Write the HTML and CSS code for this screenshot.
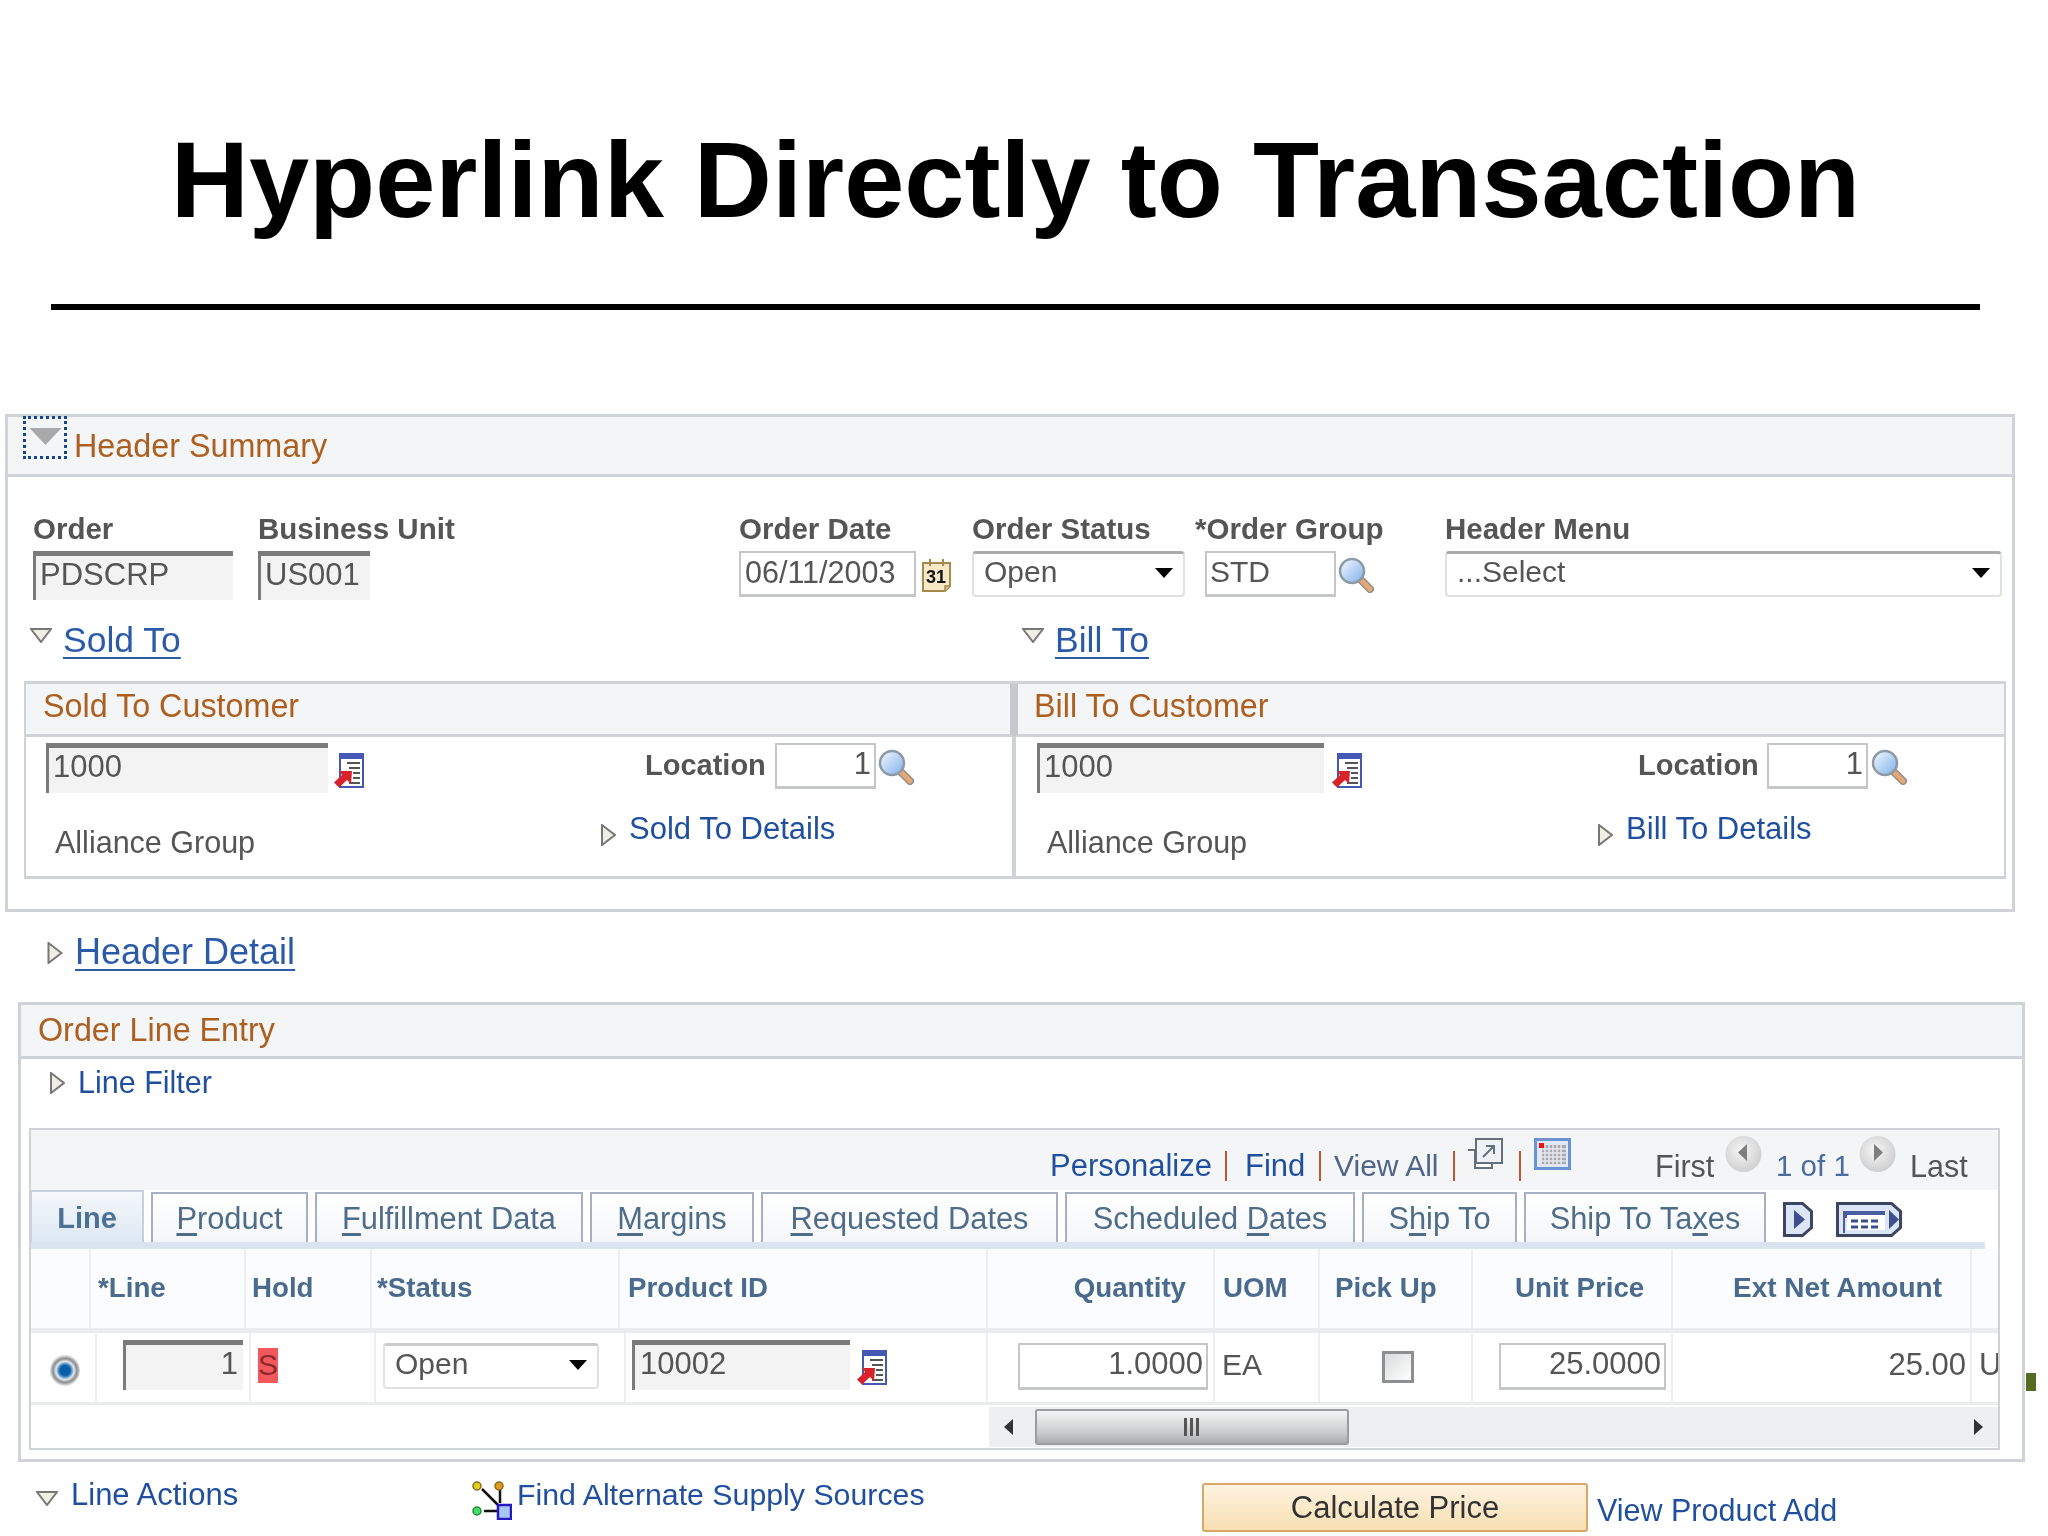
FILE: index.html
```html
<!DOCTYPE html>
<html lang="en">
<head>
<meta charset="utf-8">
<title>Hyperlink Directly to Transaction</title>
<link rel="stylesheet" href="styles.css">
</head>
<body>
<svg class="defs" width="0" height="0" aria-hidden="true">
  <defs>
    <linearGradient id="lens" x1="0" y1="0" x2="1" y2="1"><stop offset="0" stop-color="#f4f9ff"/><stop offset="1" stop-color="#7fb0ea"/></linearGradient>
    <symbol id="mag" viewBox="0 0 36 36">
      <line x1="23" y1="23" x2="32" y2="32" stroke="#8f8f8f" stroke-width="8" stroke-linecap="round"/>
      <line x1="23" y1="23" x2="32" y2="32" stroke="#e6a873" stroke-width="5" stroke-linecap="round"/>
      <circle cx="14" cy="14" r="12" fill="url(#lens)" stroke="#8d9aa6" stroke-width="2.5"/>
    </symbol>
    <symbol id="prompt" viewBox="0 0 30 35">
      <rect x="6" y="1" width="23" height="33" fill="#fff" stroke="#4458b4" stroke-width="2"/>
      <rect x="6" y="1" width="23" height="5" fill="#4458b4"/>
      <path d="M13 10h13M15 15h11M19 20h7M19 25h7M15 30h11" stroke="#555" stroke-width="2"/>
      <path d="M18 18l-1 13-4-4-8 7.500-5-5 8-7.500-3-4z" fill="#d8232a"/>
    </symbol>
    <symbol id="cal" viewBox="0 0 30 34">
      <path d="M1 5h27v23l-5 5H1z" fill="#f7e8c6" stroke="#a58a4e" stroke-width="2"/>
      <path d="M23 33v-5h5" fill="#d8c08a" stroke="#a58a4e" stroke-width="1.5"/>
      <path d="M8 1v7M21 1v7" stroke="#a58a4e" stroke-width="2"/>
      <text x="14" y="25" font-family="Liberation Sans" font-size="18" font-weight="700" text-anchor="middle" fill="#111">31</text>
    </symbol>
    <symbol id="tri-down" viewBox="0 0 22 15">
      <path d="M1 1h20L11 14z" fill="#eeeee4" stroke="#777" stroke-width="2"/>
    </symbol>
    <symbol id="tri-right" viewBox="0 0 15 22">
      <path d="M1 1l13 10L1 21z" fill="#eeeee4" stroke="#777" stroke-width="2"/>
    </symbol>
    <symbol id="popout" viewBox="0 0 36 32">
      <path d="M1 12h7v18h17v-5" fill="#fff" stroke="#66707c" stroke-width="2"/>
      <rect x="9" y="1" width="26" height="24" fill="#eef2f6" stroke="#66707c" stroke-width="2"/>
      <path d="M16 19l11-11M19 8h8v8" fill="none" stroke="#66707c" stroke-width="2"/>
    </symbol>
    <symbol id="grid" viewBox="0 0 37 32">
      <rect x="1.5" y="1.5" width="34" height="29" fill="#dfe8f4" stroke="#6d94d2" stroke-width="3"/>
      <path d="M8 7h24v19H8z" fill="#a8a8b0"/>
      <path d="M11 6v21M15 6v21M19 6v21M23 6v21M27 6v21M7 11h25M7 15h25M7 19h25M7 23h25" stroke="#e6e8ec" stroke-width="1.5"/>
      <rect x="5" y="5" width="5" height="5" fill="#ee1111"/>
    </symbol>
    <radialGradient id="orb" cx=".45" cy=".4" r=".6"><stop offset="0" stop-color="#f6f6f6"/><stop offset="1" stop-color="#cfcfcf"/></radialGradient>
    <symbol id="orb-left" viewBox="0 0 37 38">
      <circle cx="18.5" cy="19" r="18" fill="url(#orb)"/>
      <path d="M22 9v17l-9-8.500z" fill="#7f7f7f"/>
    </symbol>
    <symbol id="orb-right" viewBox="0 0 37 38">
      <circle cx="18.500" cy="19" r="18" fill="url(#orb)"/>
      <path d="M15 9v17l9-8.500z" fill="#7f7f7f"/>
    </symbol>
    <symbol id="tab-next" viewBox="0 0 30 35">
      <path d="M1.500 1.500h18l9 8v16l-9 8h-18z" fill="#dbe5f6" stroke="#3d4660" stroke-width="3"/>
      <path d="M11 8l11 9.500-11 9.500z" fill="#3f4f8c"/>
    </symbol>
    <symbol id="tab-all" viewBox="0 0 66 35">
      <path d="M1.500 1.500h54l9 8v16l-9 8h-54z" fill="#dbe5f6" stroke="#3d4660" stroke-width="3"/>
      <path d="M8 14v17M8 10h40v5H8z" fill="#4a5c9e" stroke="#4a5c9e" stroke-width="2"/>
      <rect x="11" y="13" width="38" height="15" fill="#fff"/>
      <path d="M15 19h30M15 25h30" stroke="#3f4f8c" stroke-width="3" stroke-dasharray="7 3"/>
      <path d="M53 8l10 9.500-10 9.500z" fill="#3f4f8c"/>
    </symbol>
    <symbol id="nodes" viewBox="0 0 40 39">
      <path d="M10 8l17 17M28 6v16M12 30h14" stroke="#111" stroke-width="2.500"/>
      <circle cx="5" cy="5" r="4" fill="#e0d020" stroke="#8a6a20" stroke-width="1.500"/>
      <circle cx="27" cy="5" r="4" fill="#e09a20" stroke="#8a6a20" stroke-width="1.500"/>
      <circle cx="5" cy="30" r="4" fill="#44dd66" stroke="#2a8a3a" stroke-width="1.500"/>
      <rect x="26" y="24" width="13" height="14" fill="#a8c8f4" stroke="#2a18c0" stroke-width="2.500"/>
    </symbol>
  </defs>
</svg>

<div class="slide">
  <header class="slide-head">
    <h1 class="slide-title">Hyperlink Directly to Transaction</h1>
    <div class="slide-rule"></div>
  </header>

  <section class="panel panel--summary">
    <div class="bar bar--summary">
      <span class="focus-box"><svg class="ic-focus" viewBox="0 0 34 18"><path d="M0 0h34L17 18z" fill="#a9a9a9"/></svg></span>
      <span class="bar-title">Header Summary</span>
    </div>
    <div class="fields">
      <div class="field">
        <span class="label">Order</span>
        <span class="input ro ro--order">PDSCRP</span>
      </div>
      <div class="field">
        <span class="label">Business Unit</span>
        <span class="input ro ro--unit">US001</span>
      </div>
      <div class="field">
        <span class="label">Order Date</span>
        <div class="ctl"><span class="input edit edit--date">06/11/2003</span><svg class="ic-cal"><use href="#cal"/></svg></div>
      </div>
      <div class="field">
        <span class="label">Order Status</span>
        <span class="select select--status">Open<i class="caret"></i></span>
      </div>
      <div class="field">
        <span class="label">*Order Group</span>
        <div class="ctl ctl--group"><span class="input edit edit--group">STD</span><svg class="ic-mag"><use href="#mag"/></svg></div>
      </div>
      <div class="field">
        <span class="label">Header Menu</span>
        <span class="select select--menu">...Select<i class="caret"></i></span>
      </div>
    </div>

    <div class="disclosures">
      <div class="disc"><svg class="ic-down"><use href="#tri-down"/></svg><a class="big-link">Sold To</a></div>
      <div class="disc"><svg class="ic-down"><use href="#tri-down"/></svg><a class="big-link">Bill To</a></div>
    </div>

    <div class="customers">
      <div class="cust cust--sold">
        <div class="bar bar--cust"><span class="bar-title">Sold To Customer</span></div>
        <div class="cust-top">
          <span class="input ro ro--cust">1000</span>
          <svg class="ic-prompt"><use href="#prompt"/></svg>
          <span class="label label--loc">Location</span>
          <span class="input edit edit--loc">1</span>
          <svg class="ic-mag ic-mag--loc"><use href="#mag"/></svg>
        </div>
        <div class="cust-bottom">
          <span class="plain">Alliance Group</span>
          <div class="details"><svg class="ic-right"><use href="#tri-right"/></svg><a class="link">Sold To Details</a></div>
        </div>
      </div>
      <div class="cust cust--bill">
        <div class="bar bar--cust"><span class="bar-title">Bill To Customer</span></div>
        <div class="cust-top">
          <span class="input ro ro--cust">1000</span>
          <svg class="ic-prompt"><use href="#prompt"/></svg>
          <span class="label label--loc">Location</span>
          <span class="input edit edit--loc">1</span>
          <svg class="ic-mag ic-mag--loc"><use href="#mag"/></svg>
        </div>
        <div class="cust-bottom">
          <span class="plain">Alliance Group</span>
          <div class="details"><svg class="ic-right"><use href="#tri-right"/></svg><a class="link">Bill To Details</a></div>
        </div>
      </div>
    </div>
  </section>

  <div class="header-detail"><svg class="ic-right ic-right--hd"><use href="#tri-right"/></svg><a class="big-link big-link--hd">Header Detail</a></div>

  <section class="panel panel--lines">
    <div class="bar bar--lines"><span class="bar-title">Order Line Entry</span></div>
    <div class="line-filter"><svg class="ic-right"><use href="#tri-right"/></svg><a class="link">Line Filter</a></div>

    <div class="gridbox">
      <nav class="gridnav">
        <a class="link">Personalize</a><i class="sep"></i>
        <a class="link">Find</a><i class="sep"></i>
        <span class="muted">View All</span><i class="sep"></i>
        <svg class="ic-popout"><use href="#popout"/></svg><i class="sep"></i>
        <svg class="ic-grid"><use href="#grid"/></svg>
        <span class="plain">First</span>
        <svg class="ic-orb"><use href="#orb-left"/></svg>
        <span class="count">1 of 1</span>
        <svg class="ic-orb"><use href="#orb-right"/></svg>
        <span class="plain">Last</span>
      </nav>

      <div class="tabs">
        <span class="tab tab--active"><span>Line</span></span>
        <span class="tab"><span><u>P</u>roduct</span></span>
        <span class="tab"><span><u>F</u>ulfillment Data</span></span>
        <span class="tab"><span><u>M</u>argins</span></span>
        <span class="tab"><span><u>R</u>equested Dates</span></span>
        <span class="tab"><span>Scheduled <u>D</u>ates</span></span>
        <span class="tab"><span>S<u>h</u>ip To</span></span>
        <span class="tab"><span>Ship To Ta<u>x</u>es</span></span>
        <svg class="ic-tabnext"><use href="#tab-next"/></svg>
        <svg class="ic-taball"><use href="#tab-all"/></svg>
      </div>
      <div class="tab-stripe"></div>

      <div class="thead">
        <div class="th"></div>
        <div class="th th--line">*Line</div>
        <div class="th th--hold">Hold</div>
        <div class="th th--status">*Status</div>
        <div class="th th--product">Product ID</div>
        <div class="th th--qty">Quantity</div>
        <div class="th th--uom">UOM</div>
        <div class="th th--pick">Pick Up</div>
        <div class="th th--price">Unit Price</div>
        <div class="th th--ext">Ext Net Amount</div>
        <div class="th th--end"></div>
      </div>

      <div class="trow">
        <div class="td td--radio"><span class="radio"></span></div>
        <div class="td td--line"><span class="input ro ro--line">1</span></div>
        <div class="td td--hold"><span class="hold-flag">S</span></div>
        <div class="td td--status"><span class="select select--rowstatus">Open<i class="caret"></i></span></div>
        <div class="td td--product"><span class="input ro ro--product">10002</span><svg class="ic-prompt ic-prompt--row"><use href="#prompt"/></svg></div>
        <div class="td td--qty"><span class="input edit edit--qty">1.0000</span></div>
        <div class="td td--uom"><span class="cell-text">EA</span></div>
        <div class="td td--pick"><span class="check"></span></div>
        <div class="td td--price"><span class="input edit edit--price">25.0000</span></div>
        <div class="td td--ext"><span class="cell-text">25.00</span></div>
        <div class="td td--end"><span class="cell-text">U</span></div>
      </div>

      <div class="hscroll">
        <div class="track">
          <i class="arrow arrow--left"></i>
          <div class="thumb"><i class="grip"></i></div>
          <i class="arrow arrow--right"></i>
        </div>
      </div>
    </div>
  </section>

  <footer class="actions">
    <div class="act act--line"><svg class="ic-down ic-down--act"><use href="#tri-down"/></svg><a class="link">Line Actions</a></div>
    <div class="act act--find"><svg class="ic-nodes"><use href="#nodes"/></svg><a class="link link--find">Find Alternate Supply Sources</a></div>
    <button class="calc" type="button">Calculate Price</button>
    <a class="link link--view">View Product Add</a>
  </footer>

  <i class="edge-mark"></i>
</div>
</body>
</html>
```

FILE: styles.css
```css
* { box-sizing: border-box; }
html, body { margin: 0; padding: 0; background: #fff; }
body { font-family: "Liberation Sans", Arial, sans-serif; color: #555; }
.defs { position: absolute; }
svg { display: block; flex: none; }
a { cursor: pointer; }

.slide { position: relative; width: 2048px; height: 1536px; overflow: hidden; }

/* Slide heading */
.slide-head { height: 310px; padding-top: 120px; }
.slide-title { margin: 0; font-size: 108.200px; line-height: 120px; font-weight: 700; color: #000; text-align: center; width: 2031px; }
.slide-rule { width: 1929px; height: 6px; margin: 64px 0 0 51px; background: #000; }

/* Panels */
.panel { border: 3px solid #cfd2d6; background: #fff; filter: blur(.45px); }
.panel--summary { width: 2010px; height: 498px; margin: 104px 0 0 5px; }
.panel--lines { width: 2007px; height: 460px; margin: 28px 0 0 18px; }

.bar { display: flex; align-items: center; background: #f3f5f7; border-bottom: 3px solid #cfd2d6; }
.bar-title { font-size: 32.300px; color: #ad5f1f; line-height: 40px; }
.bar--summary { height: 60px; }
.bar--summary .bar-title { margin: 0 0 0 7px; }
.bar--cust { height: 53px; padding: 0 0 7px 17px; }
.cust--sold .bar--cust { border-right: 4px solid #c5c9ce; margin-right: -2px; }
.cust--bill .bar--cust { border-left: 4px solid #c5c9ce; margin-left: -2px; padding-left: 16px; }
.bar--lines { height: 54px; padding: 0 0 2px 17px; }

.focus-box { display: flex; justify-content: center; align-self: flex-start; width: 44px; height: 43px; margin: -1px 0 0 15px; padding-top: 9px; border: 3px dotted #17468c; }
.ic-focus { width: 33px; height: 17px; }

/* Header fields */
.fields { display: grid; grid-template-columns: 225px 481px 233px 223px 250px 557px; padding: 35px 0 0 25px; height: 123px; }
.field { display: flex; flex-direction: column; }
.label { font-size: 29.500px; font-weight: 700; line-height: 34px; color: #555; white-space: nowrap; }
.field .label { margin-bottom: 5px; }
.ctl { display: flex; align-items: flex-start; }
.ctl--group { margin-left: 10px; }

.input { display: block; font-size: 31px; color: #555; white-space: nowrap; flex: none; }
.ro { height: 49px; background: #f3f3f4; border-top: 5px solid #7b7b7b; border-left: 3px solid #7b7b7b; padding: 0 0 0 4px; line-height: 37px; }
.ro--order { width: 200px; }
.ro--unit { width: 112px; }
.ro--cust { width: 282px; padding-left: 4px; line-height: 37px; height: 50px; }
.ro--line { width: 120px; height: 50px; text-align: right; padding: 0 5px 0 0; }
.ro--product { width: 218px; height: 50px; padding-left: 5px; }

.edit { height: 46px; background: #fff; border: 2px solid #c4c6c8; border-bottom-width: 3px; padding: 0 6px; line-height: 38px; }
.edit--date { width: 177px; font-size: 30.500px; padding-left: 4px; }
.edit--group { width: 131px; padding-left: 3px; font-size: 30px; }
.edit--loc { width: 101px; text-align: right; padding-right: 3px; }
.edit--qty { width: 190px; text-align: right; padding-right: 3px; }
.edit--price { width: 167px; text-align: right; padding-right: 3px; }

.ic-cal { width: 30px; height: 34px; margin: 7px 0 0 6px; }
.ic-mag { width: 36px; height: 36px; margin: 6px 0 0 2px; }

.select { display: block; position: relative; height: 46px; font-size: 30px; line-height: 36px; color: #555; background: #fff; border: 2px solid #dfe1e3; border-top: 3px solid #a9abad; border-radius: 4px; padding-left: 10px; }
.select--status { width: 213px; }
.select--menu { width: 557px; padding-left: 10px; }
.select--rowstatus { width: 216px; border-top-color: #c9cbcd; }
.caret { position: absolute; top: 14px; right: 10px; width: 0; height: 0; border-left: 9px solid transparent; border-right: 9px solid transparent; border-top: 10px solid #000; }

/* Disclosures */
.disclosures { display: grid; grid-template-columns: 992px 900px; padding: 17px 0 0 22px; height: 81px; }
.disc { display: flex; align-items: flex-start; }
.ic-down { width: 22px; height: 15px; margin-top: 11px; }
.big-link { font-size: 35.500px; line-height: 46px; color: #2a5aa8; text-decoration: underline; text-decoration-thickness: 2px; text-underline-offset: 5px; margin: 0 0 0 11px; }

/* Customer boxes */
.customers { display: flex; margin-left: 16px; }
.cust { height: 198px; border: 2px solid #cfd2d6; border-top-width: 3px; border-bottom-width: 3px; }
.cust--sold { width: 990px; }
.cust--bill { width: 992px; }
.cust-top { display: grid; align-items: start; padding-top: 6px; height: 61px; }
.cust--sold .cust-top { grid-template-columns: 288px 311px 130px 103px auto; padding-left: 20px; }
.cust--bill .cust-top { grid-template-columns: 295px 306px 129px 104px auto; padding-left: 21px; }
.cust--bill .ro--cust { width: 287px; }
.ic-prompt { width: 30px; height: 35px; margin-top: 10px; }
.label--loc { line-height: 44px; font-size: 29px; }
.ic-mag--loc { margin: 6px 0 0 0; }
.cust-bottom { display: flex; padding-top: 11px; }
.plain { font-size: 30.500px; color: #555; line-height: 40px; white-space: nowrap; }
.cust-bottom .plain { margin-left: 29px; padding-top: 13px; }
.cust--bill .cust-bottom .plain { margin-left: 31px; }
.cust--sold .details { margin-left: 346px; }
.cust--bill .details { margin-left: 351px; }
.details { display: flex; align-items: flex-start; }
.details .ic-right { margin-top: 15px; }
.ic-right { width: 15px; height: 22px; margin-top: 11px; }
.link { font-size: 31px; line-height: 40px; color: #1f4f9e; white-space: nowrap; }
.details .link { margin-left: 13px; }

/* Header Detail */
.header-detail { display: flex; align-items: flex-start; height: 44px; margin: 18px 0 0 47px; filter: blur(.45px); }
.ic-right--hd { width: 16px; height: 22px; margin-top: 12px; }
.big-link--hd { font-size: 36px; margin: -1px 0 0 12px; }

/* Order line entry */
.line-filter { display: flex; align-items: flex-start; height: 69px; padding: 0 0 0 29px; }
.line-filter .ic-right { margin-top: 13px; }
.line-filter .link { margin: 3px 0 0 13px; font-size: 30.500px; }

.gridbox { width: 1971px; height: 322px; margin-left: 8px; border: 2px solid #cfd2d6; overflow: hidden; }
.gridnav { display: grid; grid-template-columns: 175px 20px 74px 15px 119px 14px 52px 15px 121px 70px 51px 83px 51px auto; align-items: center; height: 60px; padding: 8px 0 0 1019px; background: #f3f5f7; }
.gridnav > svg { align-self: start; }
.gridnav > a, .gridnav > span, .gridnav > i { margin-top: 4px; }
.muted { font-size: 30px; color: #4f6488; white-space: nowrap; }
.count { font-size: 29.500px; color: #4a6c9e; white-space: nowrap; }
.sep { display: block; width: 2px; height: 30px; background: #c2572f; }
.ic-popout { width: 36px; height: 32px; }
.ic-grid { width: 37px; height: 32px; }
.ic-orb { width: 37px; height: 38px; margin-top: -3px; }

.tabs { display: grid; grid-template-columns: 114px 157px 268px 164px 297px 290px 155px 242px 40px 82px; column-gap: 7px; justify-content: start; align-items: end; height: 52px; margin-left: -1px; }
.tab { display: flex; justify-content: center; align-items: center; height: 50px; font-size: 30.800px; color: #4f6c88; white-space: nowrap; background: linear-gradient(#fff, #f4f6f9); border: 2px solid #a8aec4; border-bottom: 0; padding-top: 2px; }
.tab u { text-underline-offset: 4px; }
.tab--active { height: 52px; font-weight: 700; font-size: 29px; color: #4d7096; background: linear-gradient(#f4f8fb, #dde8f3); border-color: #c6cfdb; }
.ic-tabnext { width: 30px; height: 35px; align-self: center; margin: 7px 0 0 10px; }
.ic-taball { width: 66px; height: 35px; align-self: center; margin: 7px 0 0 16px; }
.tab-stripe { width: 1954px; height: 7px; background: #d9e4f0; }

.thead, .trow { display: grid; }
.thead { grid-template-columns: 60px 155px 126px 248px 368px 227px 105px 153px 200px 299px 26px; height: 84px; border-bottom: 5px solid #e9ebed; }
.th { display: flex; align-items: center; font-size: 27.700px; font-weight: 700; color: #4a6a8e; white-space: nowrap; background: #fbfcfd; border-right: 2px solid #eceef0; padding-bottom: 2px; }
.th--line { padding-left: 7px; }
.th--hold { padding-left: 6px; }
.th--status { padding-left: 5px; }
.th--product { padding-left: 8px; }
.th--qty { justify-content: flex-end; padding-right: 27px; }
.th--uom { padding-left: 8px; }
.th--pick { padding-left: 15px; }
.th--price { padding-left: 42px; }
.th--ext { padding-left: 60px; font-size: 28px; }
.th--end { border-right: 0; }

.trow { grid-template-columns: 66px 154px 125px 250px 362px 227px 105px 153px 200px 299px 26px; height: 72px; border-bottom: 3px solid #e9ebed; }
.td { display: flex; align-items: flex-start; padding-top: 7px; border-right: 2px solid #eceef0; font-size: 31px; color: #555; overflow: hidden; }
.td--radio { padding: 22px 0 0 19px; }
.radio { display: block; width: 30px; height: 31px; border-radius: 50%; background: radial-gradient(circle, #0a5ea8 0 5px, #5f9fd0 7px, #e4e6e8 9px, #8a8d90 12px, #e0e2e4 15px); }
.td--line { padding-left: 26px; }
.td--hold { padding: 15px 0 0 7px; }
.hold-flag { display: block; width: 20px; height: 35px; background: #f2585c; color: #8a2a2e; font-size: 30px; line-height: 33px; text-align: center; }
.td--status { padding: 10px 0 0 7px; }
.td--product { padding-left: 6px; }
.ic-prompt--row { margin: 10px 0 0 7px; }
.td--qty { padding: 10px 0 0 30px; }
.td--qty .input, .td--price .input { height: 47px; }
.td--uom { padding: 14px 0 0 7px; font-size: 30px; }
.td--pick { padding: 18px 0 0 62px; }
.check { display: block; width: 32px; height: 32px; border: 3px solid #8c8e90; background: linear-gradient(135deg, #d9dadb, #fff); }
.td--price { padding: 10px 0 0 26px; }
.td--ext { justify-content: flex-end; padding: 14px 4px 0 0; }
.td--end { padding: 14px 0 0 7px; border-right: 0; }
.cell-text { line-height: 36px; }

.hscroll { height: 45px; padding: 2px 0 0 958px; }
.track { position: relative; display: flex; align-items: center; height: 40px; background: #eeeff0; }
.thumb { display: flex; align-items: center; justify-content: center; width: 314px; height: 36px; margin-left: 46px; border: 2px solid #9a9c9e; border-radius: 3px; background: linear-gradient(#f4f4f4, #c9cacb 70%, #a9aaab); }
.grip { display: block; width: 16px; height: 18px; background: repeating-linear-gradient(90deg, #555 0 3px, transparent 3px 6px); }
.arrow { display: block; position: absolute; top: 12px; width: 0; height: 0; border-top: 8px solid transparent; border-bottom: 8px solid transparent; }
.arrow--left { left: 15px; border-right: 9px solid #333; }
.arrow--right { left: 985px; border-left: 9px solid #333; }

/* Bottom actions */
.actions { display: flex; align-items: flex-start; height: 72px; filter: blur(.45px); }
.act { display: flex; align-items: flex-start; }
.act--line { width: 472px; padding: 13px 0 0 36px; }
.ic-down--act { margin-top: 16px; }
.act--line .link { margin-left: 13px; }
.act--find { width: 732px; padding-top: 19px; }
.ic-nodes { width: 40px; height: 39px; }
.link--find { margin: -6px 0 0 5px; font-size: 30.300px; }
.calc { width: 386px; height: 49px; margin-top: 21px; margin-left: -2px; border: 2px solid #d8a768; border-radius: 3px; background: linear-gradient(#fdf3df, #f8dfb2); font: 31px/40px "Liberation Sans", Arial, sans-serif; color: #333; padding: 0; }
.link--view { margin: 28px 0 0 9px; font-size: 30.500px; }

.edge-mark { position: absolute; left: 2026px; top: 1373px; width: 10px; height: 18px; background: #556b22; }
```
